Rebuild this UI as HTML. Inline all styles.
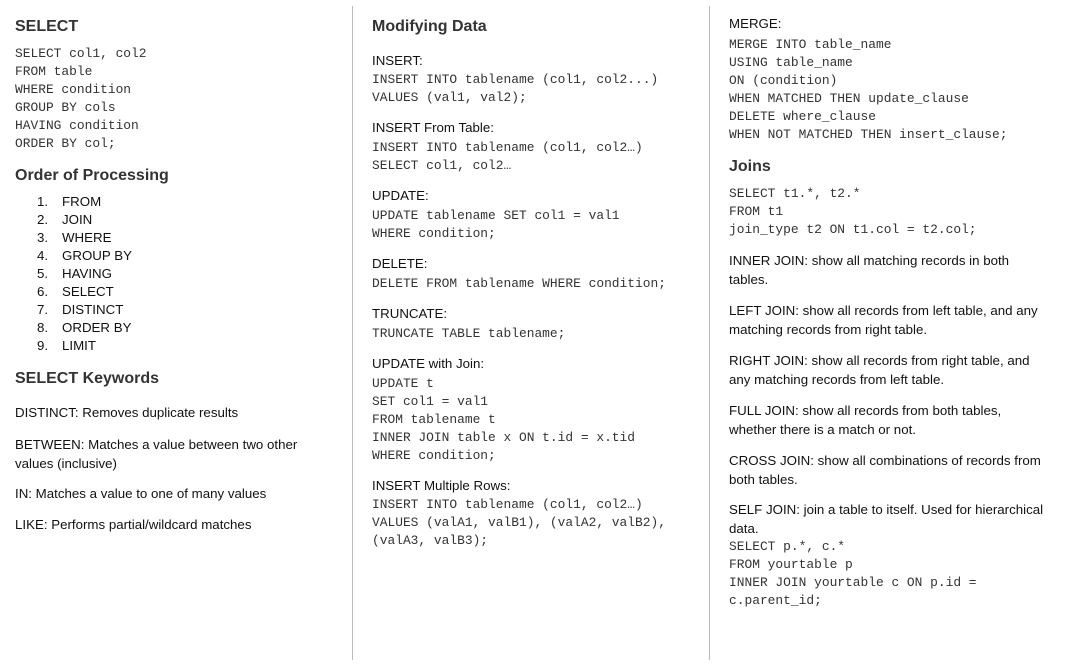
<!DOCTYPE html>
<html><head><meta charset="utf-8"><style>
body{margin:0;width:1068px;height:670px;background:#fff;position:relative;overflow:hidden;font-family:"Liberation Sans",Arial,sans-serif;color:#111}
.a{position:absolute;white-space:pre;line-height:18px}
.h{font-weight:bold;font-size:16px;color:#333;line-height:20px}
.c{font-family:"Liberation Mono","Courier New",monospace;font-size:12.9px;color:#333}
.t{font-size:13.3px}
.v{position:absolute;top:6px;width:1px;height:654px;background:#bbb}
</style></head><body>
<div class="v" style="left:352px"></div>
<div class="v" style="left:709px"></div>

<div class="a h" style="left:15px;top:17px">SELECT</div>
<div class="a c" style="left:15px;top:45px">SELECT col1, col2
FROM table
WHERE condition
GROUP BY cols
HAVING condition
ORDER BY col;</div>
<div class="a h" style="left:15px;top:166px">Order of Processing</div>
<div class="a t" style="left:37px;top:193px">1.
2.
3.
4.
5.
6.
7.
8.
9.</div>
<div class="a t" style="left:62px;top:193px">FROM
JOIN
WHERE
GROUP BY
HAVING
SELECT
DISTINCT
ORDER BY
LIMIT</div>
<div class="a h" style="left:15px;top:369px">SELECT Keywords</div>
<div class="a t" style="left:15px;top:404px">DISTINCT: Removes duplicate results</div>
<div class="a t" style="left:15px;top:435px;line-height:19px">BETWEEN: Matches a value between two other
values (inclusive)</div>
<div class="a t" style="left:15px;top:485px">IN: Matches a value to one of many values</div>
<div class="a t" style="left:15px;top:516px">LIKE: Performs partial/wildcard matches</div>

<div class="a h" style="left:372px;top:17px">Modifying Data</div>
<div class="a t" style="left:372px;top:52px">INSERT:</div>
<div class="a c" style="left:372px;top:71px">INSERT INTO tablename (col1, col2...)
VALUES (val1, val2);</div>
<div class="a t" style="left:372px;top:119px">INSERT From Table:</div>
<div class="a c" style="left:372px;top:139px">INSERT INTO tablename (col1, col2…)
SELECT col1, col2…</div>
<div class="a t" style="left:372px;top:187px">UPDATE:</div>
<div class="a c" style="left:372px;top:207px">UPDATE tablename SET col1 = val1
WHERE condition;</div>
<div class="a t" style="left:372px;top:255px">DELETE:</div>
<div class="a c" style="left:372px;top:275px">DELETE FROM tablename WHERE condition;</div>
<div class="a t" style="left:372px;top:305px">TRUNCATE:</div>
<div class="a c" style="left:372px;top:325px">TRUNCATE TABLE tablename;</div>
<div class="a t" style="left:372px;top:355px">UPDATE with Join:</div>
<div class="a c" style="left:372px;top:375px">UPDATE t
SET col1 = val1
FROM tablename t
INNER JOIN table x ON t.id = x.tid
WHERE condition;</div>
<div class="a t" style="left:372px;top:477px">INSERT Multiple Rows:</div>
<div class="a c" style="left:372px;top:496px">INSERT INTO tablename (col1, col2…)
VALUES (valA1, valB1), (valA2, valB2),
(valA3, valB3);</div>

<div class="a t" style="left:729px;top:15px">MERGE:</div>
<div class="a c" style="left:729px;top:36px">MERGE INTO table_name
USING table_name
ON (condition)
WHEN MATCHED THEN update_clause
DELETE where_clause
WHEN NOT MATCHED THEN insert_clause;</div>
<div class="a h" style="left:729px;top:157px">Joins</div>
<div class="a c" style="left:729px;top:185px">SELECT t1.*, t2.*
FROM t1
join_type t2 ON t1.col = t2.col;</div>
<div class="a t" style="left:729px;top:251px;line-height:19px">INNER JOIN: show all matching records in both
tables.</div>
<div class="a t" style="left:729px;top:301px;line-height:19px">LEFT JOIN: show all records from left table, and any
matching records from right table.</div>
<div class="a t" style="left:729px;top:351px;line-height:19px">RIGHT JOIN: show all records from right table, and
any matching records from left table.</div>
<div class="a t" style="left:729px;top:401px;line-height:19px">FULL JOIN: show all records from both tables,
whether there is a match or not.</div>
<div class="a t" style="left:729px;top:451px;line-height:19px">CROSS JOIN: show all combinations of records from
both tables.</div>
<div class="a t" style="left:729px;top:500px;line-height:19px">SELF JOIN: join a table to itself. Used for hierarchical
data.</div>
<div class="a c" style="left:729px;top:538px">SELECT p.*, c.*
FROM yourtable p
INNER JOIN yourtable c ON p.id =
c.parent_id;</div>
</body></html>
